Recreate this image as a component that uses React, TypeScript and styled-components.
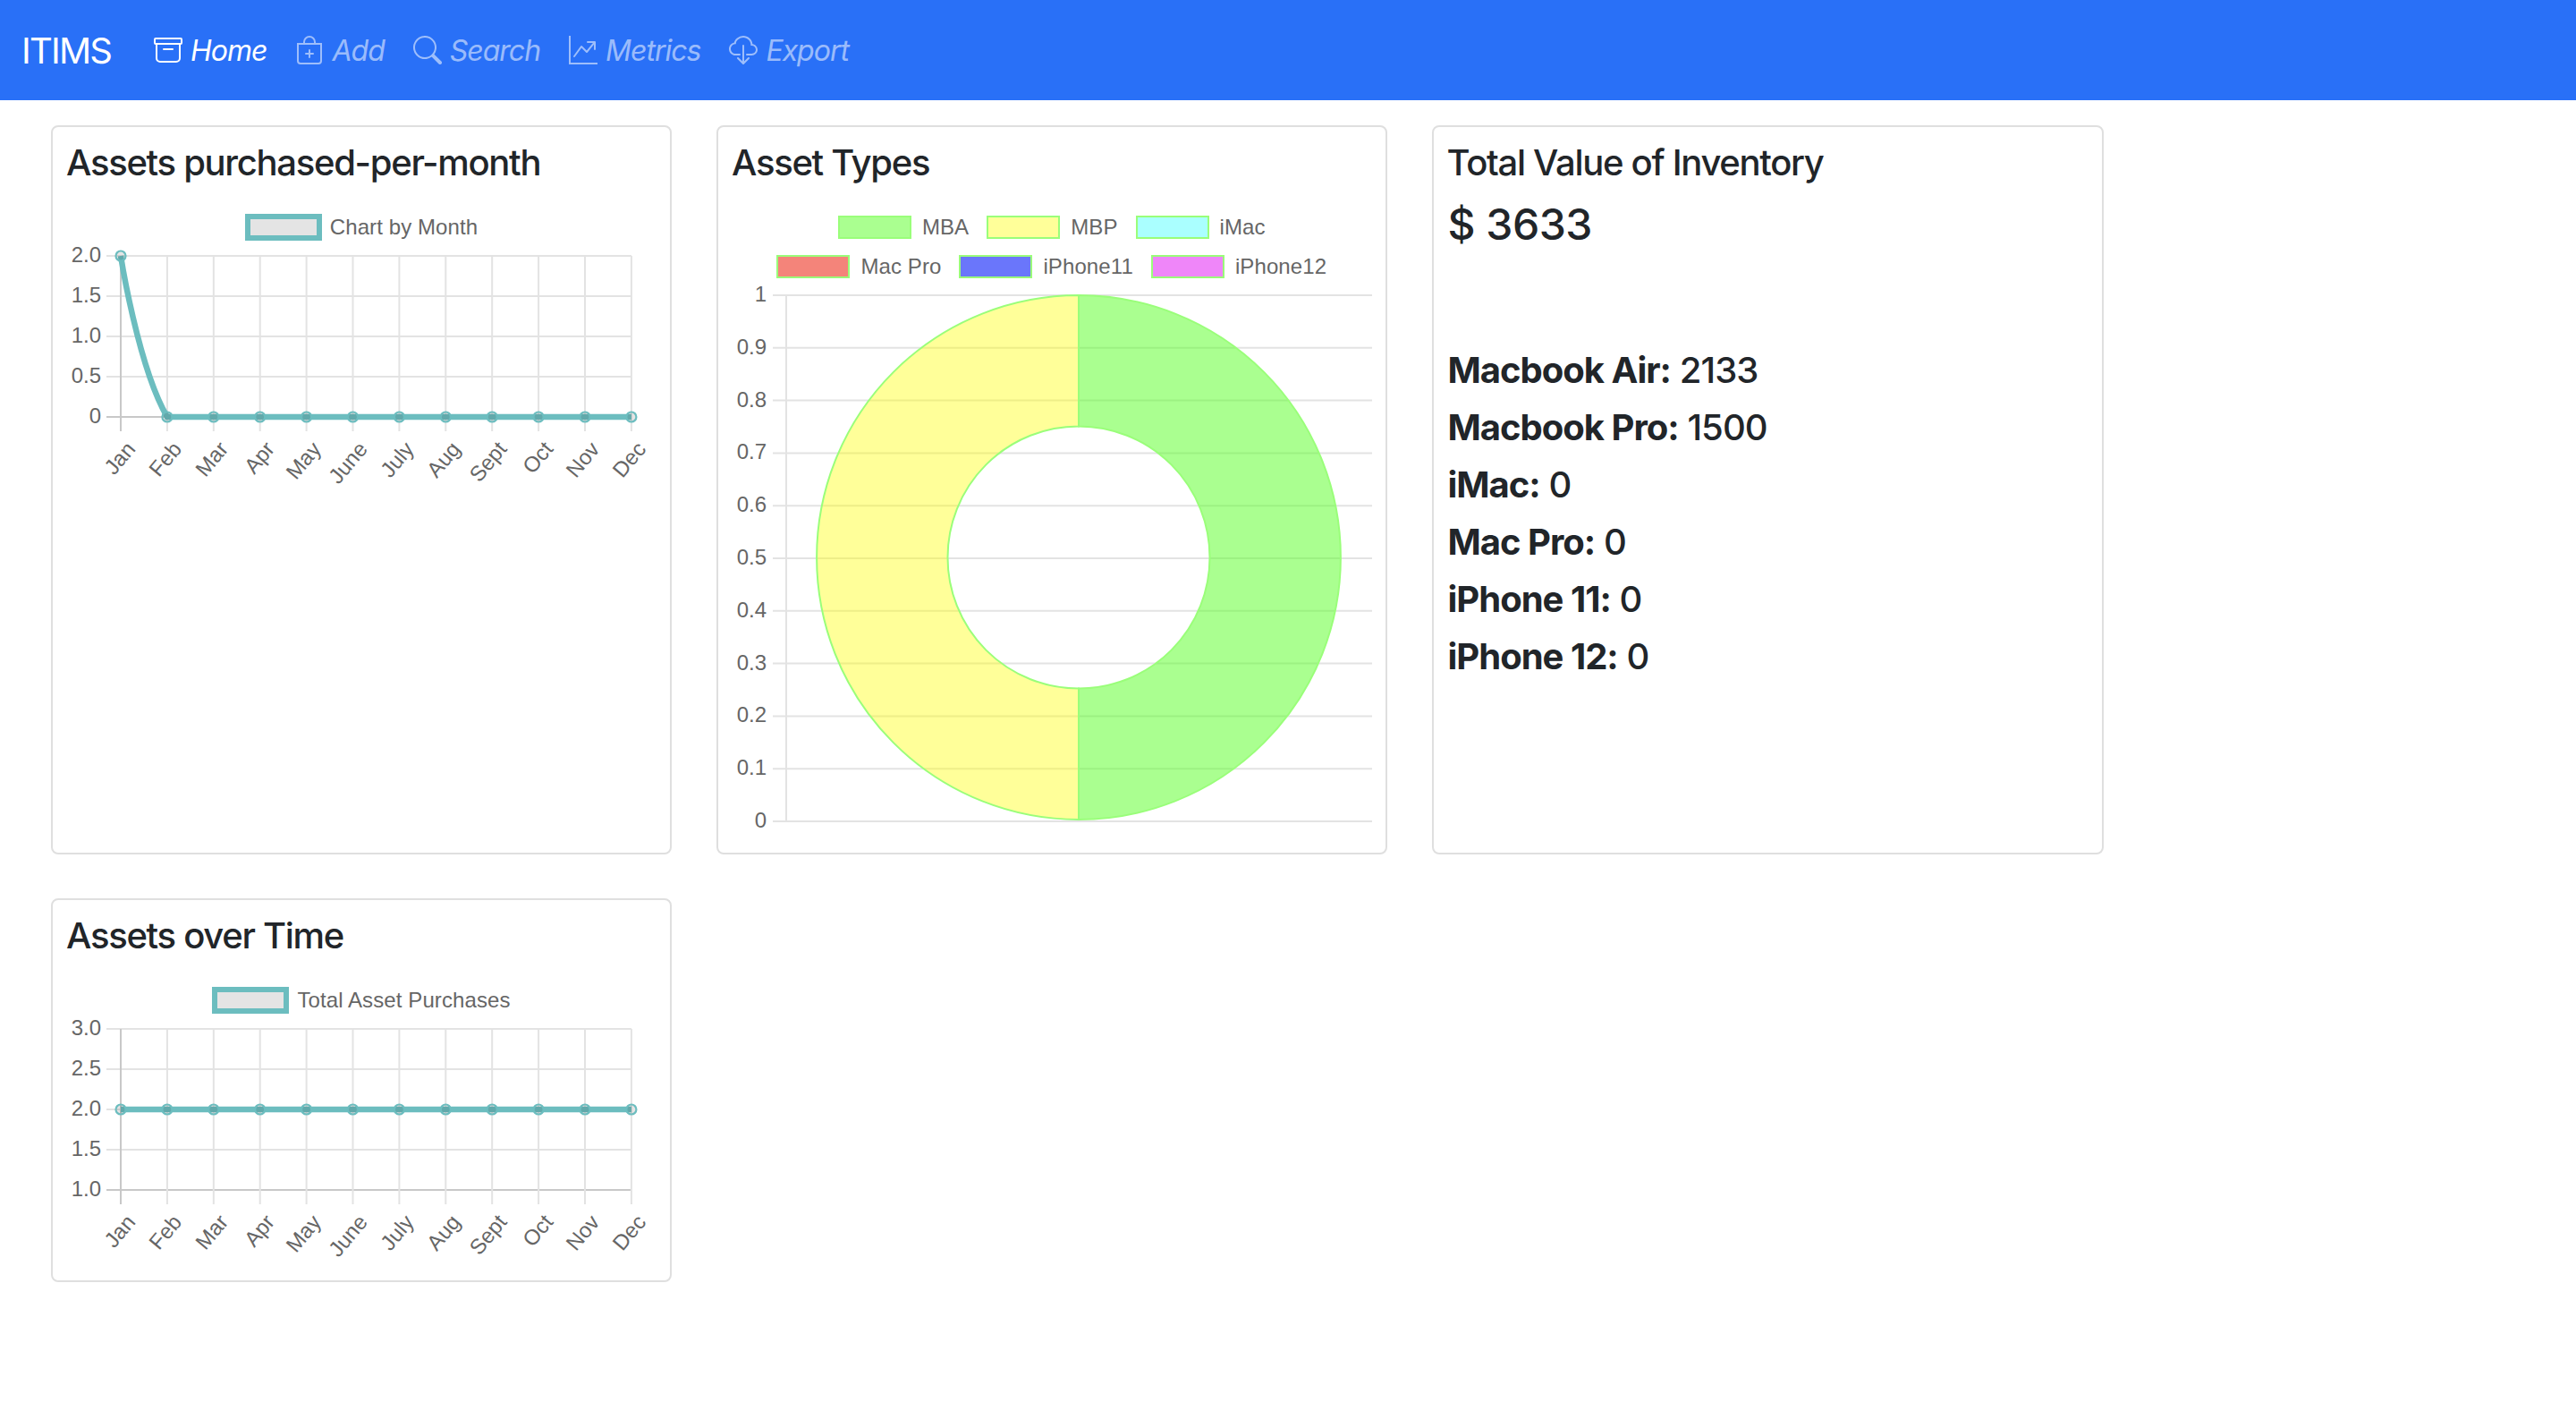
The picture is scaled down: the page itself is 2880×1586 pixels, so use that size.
import React from "react";
import styled, { createGlobalStyle } from "styled-components";
import { BsArchive, BsBagPlus, BsSearch, BsGraphUpArrow, BsCloudDownload } from "react-icons/bs";

const GlobalStyle = createGlobalStyle`
  body {
    margin: 0;
    background: #fff;
    color: #212529;
    font-family: Inter, "Noto Sans", sans-serif;
  }
`;

const MONTHS = ["Jan", "Feb", "Mar", "Apr", "May", "June", "July", "Aug", "Sept", "Oct", "Nov", "Dec"];
const NAV = [
  { label: "Home", Icon: BsArchive, active: true },
  { label: "Add", Icon: BsBagPlus },
  { label: "Search", Icon: BsSearch },
  { label: "Metrics", Icon: BsGraphUpArrow },
  { label: "Export", Icon: BsCloudDownload },
];
const DONUT_LEGEND = [
  [
    { label: "MBA", color: "#aaff90" },
    { label: "MBP", color: "#ffff99" },
    { label: "iMac", color: "#aaffff" },
  ],
  [
    { label: "Mac Pro", color: "#f4847a" },
    { label: "iPhone11", color: "#6a76fb" },
    { label: "iPhone12", color: "#ef86f9" },
  ],
];
const STATS = [
  ["Macbook Air:", "2133"],
  ["Macbook Pro:", "1500"],
  ["iMac:", "0"],
  ["Mac Pro:", "0"],
  ["iPhone 11:", "0"],
  ["iPhone 12:", "0"],
];

// plot box of the line charts, in svg units
const X0 = 60;
const STEP_X = 51.9;
const Y0 = 17;
const STEP_Y = 45;
const GRID = "#e3e3e3";
const AXIS = "#c8c8c8";

type LineChartProps = { yLabels: string[]; linePath: string; points: number[] };

function LineChart({ yLabels, linePath, points }: LineChartProps) {
  const xEnd = X0 + STEP_X * 11;
  const yEnd = Y0 + STEP_Y * 4;
  return (
    <ChartSvg width={658} height={290}>
      {yLabels.map((label, i) => {
        const y = Y0 + STEP_Y * i;
        return (
          <g key={label}>
            <line x1={44} x2={xEnd} y1={y} y2={y} stroke={i === 4 ? AXIS : GRID} strokeWidth={2} />
            <AxisText x={38} y={y} dy={-1.5} textAnchor="end" dominantBaseline="central">
              {label}
            </AxisText>
          </g>
        );
      })}
      {MONTHS.map((month, i) => {
        const x = X0 + STEP_X * i;
        return (
          <g key={month}>
            <line x1={x} x2={x} y1={Y0} y2={yEnd + 16} stroke={i === 0 ? AXIS : GRID} strokeWidth={2} />
            <AxisText
              textAnchor="end"
              dominantBaseline="central"
              transform={`translate(${x + 11} ${yEnd + 31}) rotate(-50)`}
            >
              {month}
            </AxisText>
          </g>
        );
      })}
      <path d={linePath} fill="none" stroke="#6cbdbf" strokeWidth={6.5} />
      {points.map((y, i) => (
        <circle
          key={i}
          cx={X0 + STEP_X * i}
          cy={y}
          r={5.5}
          fill="rgba(0,0,0,.1)"
          stroke="#6cbdbf"
          strokeWidth={2.2}
        />
      ))}
    </ChartSvg>
  );
}

function DonutChart() {
  const labels = ["1", "0.9", "0.8", "0.7", "0.6", "0.5", "0.4", "0.3", "0.2", "0.1", "0"];
  const cx = 387;
  const cy = 310;
  const r = 293;
  const inner = 146.5;
  return (
    <ChartSvg width={714} height={625}>
      <line x1={60} x2={60} y1={17} y2={605} stroke={GRID} strokeWidth={2} />
      {labels.map((label, i) => {
        const y = 17 + 58.8 * i;
        return (
          <g key={label}>
            <line x1={45} x2={715} y1={y} y2={y} stroke={GRID} strokeWidth={2} />
            <AxisText x={38} y={y} dy={-1.5} textAnchor="end" dominantBaseline="central">
              {label}
            </AxisText>
          </g>
        );
      })}
      <path
        d={`M${cx} ${cy - r}A${r} ${r} 0 0 1 ${cx} ${cy + r}L${cx} ${cy + inner}A${inner} ${inner} 0 0 0 ${cx} ${cy - inner}Z`}
        fill="rgba(85,255,34,.5)"
        stroke="#9afe7a"
        strokeWidth={2}
      />
      <path
        d={`M${cx} ${cy + r}A${r} ${r} 0 0 1 ${cx} ${cy - r}L${cx} ${cy - inner}A${inner} ${inner} 0 0 0 ${cx} ${cy + inner}Z`}
        fill="rgba(255,255,0,.4)"
        stroke="#9afe7a"
        strokeWidth={2}
      />
    </ChartSvg>
  );
}

export default function App() {
  const flat = Array.from({ length: 12 }, () => Y0 + STEP_Y * 2);
  const dropped = [Y0, ...Array.from({ length: 11 }, () => Y0 + STEP_Y * 4)];
  const yBase = Y0 + STEP_Y * 4;
  return (
    <>
      <GlobalStyle />
      <Navbar>
        <Brand>ITIMS</Brand>
        <NavLinks>
          {NAV.map(({ label, Icon, active }) => (
            <NavItem key={label} $active={!!active}>
              <Icon size={32} />
              <span>{label}</span>
            </NavItem>
          ))}
        </NavLinks>
      </Navbar>
      <Main>
        <Card>
          <CardTitle>Assets purchased-per-month</CardTitle>
          <Legend>
            <LegendRow>
              <LegendItem>
                <LineSwatch />
                <LegendLabel>Chart by Month</LegendLabel>
              </LegendItem>
            </LegendRow>
          </Legend>
          <LineChart
            yLabels={["2.0", "1.5", "1.0", "0.5", "0"]}
            linePath={`M${X0} ${Y0}C${X0} ${Y0} 79.4 141 ${X0 + STEP_X} ${yBase}L${X0 + STEP_X * 11} ${yBase}`}
            points={dropped}
          />
        </Card>
        <Card>
          <CardTitle>Asset Types</CardTitle>
          <Legend>
            {DONUT_LEGEND.map((row, i) => (
              <LegendRow key={i}>
                {row.map((item) => (
                  <LegendItem key={item.label}>
                    <ColorSwatch $color={item.color} />
                    <LegendLabel>{item.label}</LegendLabel>
                  </LegendItem>
                ))}
              </LegendRow>
            ))}
          </Legend>
          <DonutChart />
        </Card>
        <Card>
          <CardTitle>Total Value of Inventory</CardTitle>
          <TotalValue>$ 3633</TotalValue>
          {STATS.map(([name, value]) => (
            <Stat key={name}>
              <strong>{name}</strong> {value}
            </Stat>
          ))}
        </Card>
        <Card>
          <CardTitle>Assets over Time</CardTitle>
          <Legend>
            <LegendRow>
              <LegendItem>
                <LineSwatch />
                <LegendLabel>Total Asset Purchases</LegendLabel>
              </LegendItem>
            </LegendRow>
          </Legend>
          <LineChart
            yLabels={["3.0", "2.5", "2.0", "1.5", "1.0"]}
            linePath={`M${X0} ${flat[0]}L${X0 + STEP_X * 11} ${flat[0]}`}
            points={flat}
          />
        </Card>
      </Main>
    </>
  );
}

const Navbar = styled.nav`
  display: flex;
  align-items: center;
  height: 112px;
  padding-left: 24px;
  background: #2970f7;
`;

const Brand = styled.div`
  width: 148px;
  color: #fff;
  font-size: 40px;
  font-weight: 400;
  letter-spacing: -1.8px;
`;

const NavLinks = styled.div`
  display: flex;
  align-items: center;
  gap: 32px;
`;

const NavItem = styled.a<{ $active: boolean }>`
  display: flex;
  align-items: center;
  gap: 9px;
  color: ${(p) => (p.$active ? "#fff" : "rgba(255, 255, 255, 0.55)")};
  font-size: 32px;
  font-style: italic;
  letter-spacing: -1px;
`;

const Main = styled.main`
  display: grid;
  grid-template-columns: 694px 749.5px 751px;
  grid-template-rows: 815px 429px;
  column-gap: 50px;
  row-gap: 49px;
  padding: 28px 0 0 57px;
`;

const Card = styled.section`
  box-sizing: border-box;
  padding: 16px 16px 16px;
  border: 2px solid #dfdfdf;
  border-radius: 8px;
  min-width: 0;
`;

const CardTitle = styled.h5`
  margin: 0 0 0 -1px;
  font-size: 40px;
  line-height: 48px;
  font-weight: 500;
  letter-spacing: -1.3px;
`;

const Legend = styled.div`
  display: flex;
  flex-direction: column;
  gap: 14px;
  margin-top: 33px;
  font-family: "Liberation Sans", Arial, sans-serif;
`;

const LegendRow = styled.div`
  display: flex;
  justify-content: center;
  gap: 20px;
  height: 30px;
`;

const LegendItem = styled.div`
  display: flex;
  align-items: center;
  gap: 12px;
`;

const LegendLabel = styled.span`
  color: #666;
  font-size: 24px;
  letter-spacing: 0.1px;
`;

const LineSwatch = styled.span`
  box-sizing: border-box;
  width: 86px;
  height: 30px;
  margin-right: -3px;
  background: #e4e4e4;
  border: 6px solid #6cbdbf;
`;

const ColorSwatch = styled.span<{ $color: string }>`
  box-sizing: border-box;
  width: 82px;
  height: 26px;
  background: ${(p) => p.$color};
  border: 2px solid #9afe7a;
`;

const ChartSvg = styled.svg`
  display: block;
  overflow: visible;
`;

const AxisText = styled.text`
  fill: #666;
  font-family: "Liberation Sans", Arial, sans-serif;
  font-size: 24px;
`;

const TotalValue = styled.h4`
  margin: 16px 0 110px;
  font-size: 48px;
  line-height: 58px;
  font-weight: 500;
  letter-spacing: -0.5px;
`;

const Stat = styled.h5`
  margin: 0 0 16px;
  font-size: 40px;
  line-height: 48px;
  font-weight: 500;
  letter-spacing: -0.9px;

  strong {
    font-weight: 700;
    letter-spacing: -1px;
  }
`;
